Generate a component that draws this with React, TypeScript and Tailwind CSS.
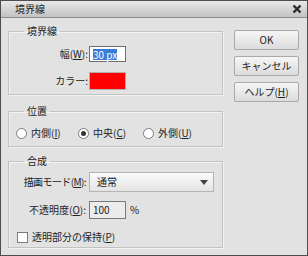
import React from "react";

const jp = { fontFamily: '"MS UI Gothic", "Noto Sans CJK JP", sans-serif' };

function Group({ title, className, children }: { title: string; className?: string; children: React.ReactNode }) {
  return (
    <fieldset className={`min-w-0 border border-[#c2c2c2] shadow-[inset_1px_1px_0_#f3f3f3,1px_1px_0_#f3f3f3] ${className ?? ""}`}>
      <legend className="ml-[15px] px-[3px] text-[10px] leading-[14px] text-[#222]">{title}</legend>
      {children}
    </fieldset>
  );
}

function Radio({ label, checked }: { label: React.ReactNode; checked?: boolean }) {
  return (
    <div className="flex items-center gap-[4px]">
      <span className="flex h-[11px] w-[11px] items-center justify-center rounded-full border border-[#7c7c7c] bg-white">
        {checked && <span className="h-[5px] w-[5px] rounded-full bg-[#333]" />}
      </span>
      <span className="whitespace-nowrap">{label}</span>
    </div>
  );
}

function Btn({ children }: { children: React.ReactNode }) {
  return (
    <button className="h-[20px] w-[65px] rounded-[2px] border border-[#a9a9a9] bg-gradient-to-b from-[#f6f6f6] to-[#dcdcdc] text-[10px] leading-none text-[#222]">
      {children}
    </button>
  );
}

export default function App() {
  return (
    <div style={jp} className="flex h-[256px] w-[308px] flex-col border border-[#4d4d4d] bg-[#e2e2e2] text-[10px] leading-[12px] text-[#222]">
      <div className="flex h-[17px] items-center justify-between border-b border-[#8a8a8a] bg-gradient-to-b from-[#e8e8e8] to-[#c3c3c3] pl-[14px] pr-[5px]">
        <span className="text-[10px] leading-none text-[#222]">境界線</span>
        <svg width="10" height="10" viewBox="0 0 10 10">
          <path d="M1.5 1.5 L8.5 8.5 M8.5 1.5 L1.5 8.5" stroke="#2a2a2a" strokeWidth="2.4" />
        </svg>
      </div>
      <div className="flex flex-1 pl-[7px] pr-[8px] pt-[6px]">
        <div className="flex w-[215px] flex-col">
          <Group title="境界線" className="h-[71px]">
            <div className="grid grid-cols-[79px_auto] items-center gap-x-[1px] gap-y-[10px] pt-[8px]">
              <span className="text-right">幅(<u>W</u>):</span>
              <span className="flex h-[16px] w-[37px] items-center border border-[#6e6e6e] bg-white px-[3px]">
                <span className="bg-[#3a7bd5] leading-[11px] text-white">30 px</span>
              </span>
              <span className="text-right">カラー:</span>
              <span className="h-[18px] w-[37px] border border-[#b0b0b0] bg-[#ff0000]" />
            </div>
          </Group>
          <Group title="位置" className="mt-[9px] h-[43px]">
            <div className="flex pl-[7px] pt-[9px]">
              <div className="w-[62px]"><Radio label={<>内側(<u>I</u>)</>} /></div>
              <div className="w-[65px]"><Radio checked label={<>中央(<u>C</u>)</>} /></div>
              <Radio label={<>外側(<u>U</u>)</>} />
            </div>
          </Group>
          <Group title="合成" className="mt-[7px] h-[94px]">
            <div className="grid grid-cols-[77px_auto] items-center gap-x-[3px] gap-y-[9px] pt-[4px]">
              <span className="whitespace-nowrap text-right tracking-[-0.6px]">描画モード(<u>M</u>):</span>
              <div className="flex h-[20px] w-[125px] items-center justify-between border border-[#b4b4b4] bg-gradient-to-b from-[#fbfbfb] to-[#e4e4e4] pl-[7px] pr-[5px]">
                <span>通常</span>
                <svg width="8" height="5" viewBox="0 0 8 5"><path d="M0 0 H8 L4 5 Z" fill="#444" /></svg>
              </div>
              <span className="whitespace-nowrap text-right">不透明度(<u>O</u>):</span>
              <div className="flex items-center gap-[4px]">
                <span className="flex h-[18px] w-[37px] items-center border border-[#7a7a7a] bg-[#ececec] px-[3px]">100</span>
                <span>%</span>
              </div>
            </div>
            <div className="flex items-center gap-[4px] pl-[8px] pt-[12px]">
              <span className="h-[11px] w-[11px] border border-[#7c7c7c] bg-white" />
              <span className="whitespace-nowrap">透明部分の保持(<u>P</u>)</span>
            </div>
          </Group>
        </div>
        <div className="ml-auto flex flex-col gap-[6px] pt-[6px]">
          <Btn>OK</Btn>
          <Btn>キャンセル</Btn>
          <Btn>ヘルプ(<u>H</u>)</Btn>
        </div>
      </div>
    </div>
  );
}
